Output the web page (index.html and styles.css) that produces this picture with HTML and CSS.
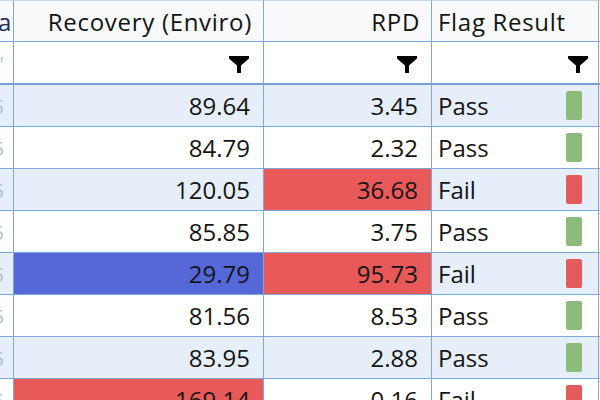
FILE: index.html
```html
<!DOCTYPE html>
<html>
<head>
<meta charset="utf-8">
<link rel="stylesheet" href="styles.css">
</head>
<body>
<table class="grid">
  <colgroup>
    <col class="c0"><col class="c1"><col class="c2"><col class="c3"><col class="c4">
  </colgroup>
  <thead>
    <tr class="head">
      <th class="stub"><span class="clip dark">Data</span></th>
      <th class="num">Recovery (Enviro)</th>
      <th class="num">RPD</th>
      <th class="txt">Flag Result</th>
      <th class="extra"></th>
    </tr>
    <tr class="filter">
      <th class="stub"><span class="clip grey">'</span></th>
      <th class="num"><svg class="funnel" viewBox="0 0 20 17"><path d="M0 0H20V2.5L12 9.5V17H8V9.5L0 2.5Z"/></svg></th>
      <th class="num"><svg class="funnel" viewBox="0 0 20 17"><path d="M0 0H20V2.5L12 9.5V17H8V9.5L0 2.5Z"/></svg></th>
      <th class="num"><svg class="funnel" viewBox="0 0 20 17"><path d="M0 0H20V2.5L12 9.5V17H8V9.5L0 2.5Z"/></svg></th>
      <th class="extra"></th>
    </tr>
  </thead>
  <tbody>
    <tr class="alt"><td class="stub"><span class="clip grey">5</span></td><td class="num">89.64</td><td class="num">3.45</td><td class="txt"><div class="flagcell">Pass<i class="flag pass"></i></div></td><td class="extra"></td></tr>
    <tr><td class="stub"><span class="clip grey">5</span></td><td class="num">84.79</td><td class="num">2.32</td><td class="txt"><div class="flagcell">Pass<i class="flag pass"></i></div></td><td class="extra"></td></tr>
    <tr class="alt"><td class="stub"><span class="clip grey">5</span></td><td class="num">120.05</td><td class="num bad">36.68</td><td class="txt"><div class="flagcell">Fail<i class="flag fail"></i></div></td><td class="extra"></td></tr>
    <tr><td class="stub"><span class="clip grey">5</span></td><td class="num">85.85</td><td class="num">3.75</td><td class="txt"><div class="flagcell">Pass<i class="flag pass"></i></div></td><td class="extra"></td></tr>
    <tr class="alt"><td class="stub"><span class="clip grey">5</span></td><td class="num low">29.79</td><td class="num bad">95.73</td><td class="txt"><div class="flagcell">Fail<i class="flag fail"></i></div></td><td class="extra"></td></tr>
    <tr><td class="stub"><span class="clip grey">5</span></td><td class="num">81.56</td><td class="num">8.53</td><td class="txt"><div class="flagcell">Pass<i class="flag pass"></i></div></td><td class="extra"></td></tr>
    <tr class="alt"><td class="stub"><span class="clip grey">5</span></td><td class="num">83.95</td><td class="num">2.88</td><td class="txt"><div class="flagcell">Pass<i class="flag pass"></i></div></td><td class="extra"></td></tr>
    <tr><td class="stub"><span class="clip grey">5</span></td><td class="num bad">169.14</td><td class="num">0.16</td><td class="txt"><div class="flagcell">Fail<i class="flag fail"></i></div></td><td class="extra"></td></tr>
  </tbody>
</table>
</body>
</html>
```

FILE: styles.css
```css
html, body {
  margin: 0;
  padding: 0;
  background: #ffffff;
  overflow: hidden;
  width: 600px;
  height: 400px;
}

.grid {
  border-collapse: separate;
  border-spacing: 0;
  table-layout: fixed;
  width: 619px;
  font-family: "Open Sans", "Noto Sans", sans-serif;
  font-size: 24px;
  color: #141414;
}

.c0 { width: 14px; }
.c1 { width: 250px; }
.c2 { width: 168px; }
.c3 { width: 167px; }
.c4 { width: 20px; }

.grid th, .grid td {
  box-sizing: border-box;
  border-right: 1px solid #7fa7d7;
  border-bottom: 1px solid #7fa7d7;
  padding: 0;
  white-space: nowrap;
  overflow: hidden;
  font-weight: normal;
  height: 42px;
}

.head th {
  background: #f8f9fb;
  border-top: 1px solid #c4d6ec;
  height: 42px;
  letter-spacing: 0.7px;
}

.filter th {
  background: #ffffff;
  border-bottom: 2px solid #76a0d4;
  height: 43px;
}

tbody tr td { background: #ffffff; }
tbody tr.alt td { background: #e6eff9; }

.num {
  text-align: right;
  padding-right: 13px !important;
}

.head .num { padding-right: 11px !important; }

.txt {
  text-align: left;
  padding-left: 6px !important;
}

.filter .num { padding-right: 14px !important; line-height: 0; }
.filter th:nth-child(4) { padding-right: 10px !important; }

.funnel {
  width: 20px;
  height: 17px;
  fill: #000000;
  vertical-align: middle;
  margin-top: 3px;
}

.stub {
  position: relative;
}

.clip {
  position: absolute;
  top: 50%;
  transform: translateY(-50%);
}

.dark { color: #1f2b5c; right: 1px; }
.grey { color: #b4bccb; right: 9px; font-size: 20px; }

.extra { border-right: none !important; }

td.bad { background: #e85a5a !important; }
td.low { background: #5667d8 !important; }

.flagcell {
  display: flex;
  align-items: center;
  justify-content: space-between;
  padding-right: 16px;
}

.flag {
  display: block;
  width: 16px;
  height: 29px;
  border-radius: 2px;
}
.flag.pass { background: #8dbb7c; }
.flag.fail { background: #e35b5b; }
```
